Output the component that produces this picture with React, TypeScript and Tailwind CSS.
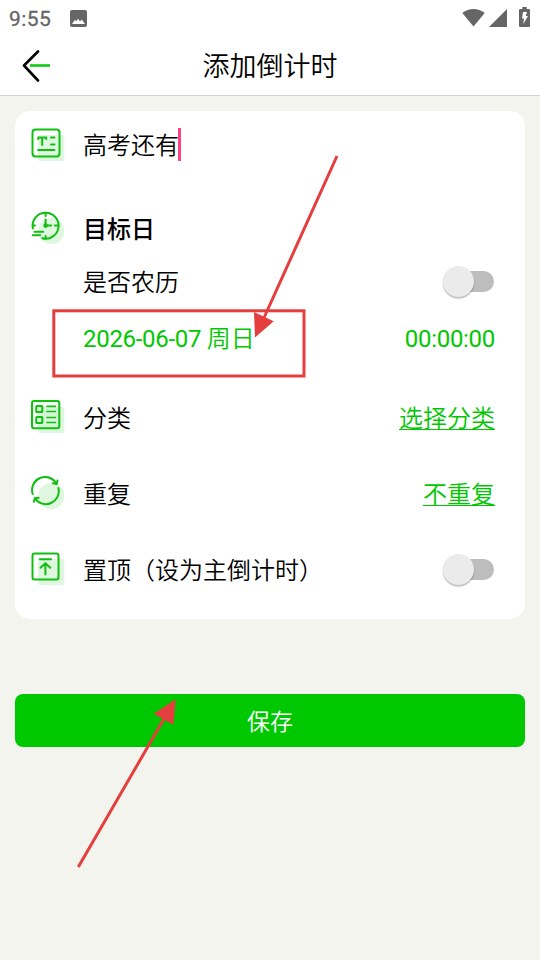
import type { ReactNode } from 'react';

function StatusBar() {
  return (
    <div className="flex h-9 items-center justify-between pl-[9px] pr-[10px] text-[#666666]">
      <div className="flex items-center">
        <span className="w-[61px] pt-[3px] text-[21px] leading-none tracking-[0.4px] [-webkit-text-stroke:0.3px_#666666]">9:55</span>
        <svg className="h-[17px] w-[17px]" viewBox="0 0 17 17">
          <rect width="17" height="17" rx="2" fill="currentColor" />
          <path d="m2 14 3-4.200 1.500 1.700L8 8.500l2 3 1.700-2L15 14z" fill="#fff" />
        </svg>
      </div>
      <div className="flex items-center">
        <svg className="mr-1 h-[20px] w-[23px]" viewBox="0 0 23 20">
          <path d="M.3 5C7-.5 16-.5 22.700 5L11.500 18.500z" fill="currentColor" />
        </svg>
        <svg className="mr-[12px] h-[20px] w-[18px]" viewBox="0 0 18 20">
          <path d="M18 1v18H0z" fill="currentColor" />
        </svg>
        <svg className="-mt-[2px] h-[20px] w-[11px]" viewBox="0 0 11 20">
          <path d="M3.300 0h4.400v2H10a1 1 0 0 1 1 1v16a1 1 0 0 1-1 1H1a1 1 0 0 1-1-1V3a1 1 0 0 1 1-1h2.300z" fill="currentColor" />
          <path d="M4 5h4L6.700 9H9l-4.700 8 .7-5.500H3z" fill="#fff" />
        </svg>
      </div>
    </div>
  );
}

function Header() {
  return (
    <header className="border-b border-[#d2d2d2] bg-white">
      <StatusBar />
      <div className="grid h-[59px] grid-cols-[80px_1fr_80px] items-center">
        <svg className="ml-[22px] h-8 w-7" viewBox="0 0 28 32" fill="none" strokeWidth="2.600" strokeLinecap="round">
          <path d="M16 1.500 2 15.500l14 15" stroke="#000" strokeLinejoin="round" />
          <path d="M8 15.500H28" stroke="#10c810" strokeLinecap="butt" />
        </svg>
        <h1 className="pt-1 text-center text-[27px] font-[350] leading-none">添加倒计时</h1>
      </div>
    </header>
  );
}

function Icon({ round, top = 7, children }: { round?: boolean; top?: number; children: ReactNode }) {
  return (
    <svg
      className="mr-[17px] h-9 w-9 shrink-0"
      viewBox="0 0 36 36"
      fill="none"
      stroke="#10c010"
      strokeWidth="2"
      strokeLinecap="round"
      strokeLinejoin="round"
    >
      {round ? (
        <circle cx="21.300" cy="20" r="13" fill="#dff6df" stroke="none" />
      ) : (
        <rect x="8" y={top} width="26.300" height="26" rx="2" fill="#dff6df" stroke="none" />
      )}
      {children}
    </svg>
  );
}

function TextIcon() {
  return (
    <Icon top={8}>
      <rect x="2.500" y="2.500" width="27" height="27" rx="3" />
      <path d="M8.200 12v-1.500h8V12M12.200 10.500V18M21 10.500h3.400M21 17.500h3.400M8.200 23h16.200" />
    </Icon>
  );
}

function ClockIcon() {
  return (
    <Icon round>
      <path d="M2.900 17.500A13 13 0 1 1 12.300 27.300" />
      <path d="M15.600 2v3M28.300 14.600h-3.500M15.600 27.500V25M3 14.600h2M15.600 8.500v6.100h5.600M4.500 20.800h8.700M2.700 24.200h7.500" />
      <circle cx="15.600" cy="14.600" r="1.300" fill="#10c010" />
    </Icon>
  );
}

function CategoryIcon() {
  return (
    <Icon>
      <rect x="2" y="1" width="27.300" height="27.300" rx="2" fill="#10c010" fillOpacity="0.04" />
      <rect x="6.300" y="6" width="6" height="6" rx="0.500" />
      <rect x="6.300" y="17" width="6" height="6" rx="0.500" />
      <path d="M17 6.300h8.400M17 11.500h8.400M17 17.500h8.400M17 22.500h8.400" strokeWidth="1.700" />
    </Icon>
  );
}

function RepeatIcon() {
  return (
    <Icon round>
      <path d="M2.700 18A13 13 0 0 1 26.500 7.800M28.400 12A13 13 0 0 1 5 22.400" />
      <path d="M27.500 4.500 26.600 8l-3.800-.700M8.600 21.800l-3.800.400-1 3.600" />
    </Icon>
  );
}

function TopIcon() {
  return (
    <Icon>
      <rect x="2.500" y="1.500" width="26" height="26" rx="2" />
      <path d="M9.800 7.300h11.200M15.400 11.500v11M10.500 15.800l4.900-4.600 4.900 4.600" />
    </Icon>
  );
}

function Toggle() {
  return (
    <span className="mb-px mr-px flex h-[21px] w-[51px] items-center rounded-full bg-gradient-to-r from-transparent from-30% to-[#bdbdbd] to-30%">
      <span className="h-[31px] w-[31px] shrink-0 rounded-full bg-[#ebebeb] shadow-[0_1.5px_1.5px_rgba(0,0,0,0.28)]" />
    </span>
  );
}

// red guide marks drawn over the screen
function Annotations() {
  return (
    <svg className="pointer-events-none absolute left-0 top-0 h-[960px] w-[540px]" viewBox="0 0 540 960" fill="none" stroke="#e53e3e" strokeWidth="3">
      <rect x="53.800" y="310.800" width="250.200" height="65.200" />
      <path d="M337 156 263 320M78.300 867 165 717" />
      <path d="m254 312 19.700 9.300L255 337.500zM153.700 713.700l22-14.400-2.400 25.400z" fill="#e53e3e" stroke="none" />
    </svg>
  );
}

export default function App() {
  return (
    <div className="relative flex h-[960px] w-[540px] flex-col overflow-hidden bg-[#f3f4ed] font-['Roboto','Noto_Sans_CJK_SC',sans-serif] text-black">
      <Header />
      <main className="px-[15px] pt-[15px]">
        <section className="rounded-[15px] bg-white pb-[11px] pl-[15px] pr-[30px] text-2xl font-[350] leading-none">
          <div className="flex h-[68px] items-center">
            <TextIcon />
            <span className="pt-0.5">高考还有</span>
            <span className="-ml-px mb-px h-[33px] w-[3px] bg-[#ff4081]" />
          </div>
          <div className="mt-[22px] flex h-14 items-center">
            <ClockIcon />
            <span className="pt-0.5 font-medium">目标日</span>
          </div>
          <div className="flex h-[50px] items-center justify-between pl-[53px]">
            <span className="pt-0.5">是否农历</span>
            <Toggle />
          </div>
          <div className="flex h-16 items-center justify-between pl-[53px] text-[#00c800]">
            <span className="font-normal tracking-[-0.3px]">
              2026-06-07 <span className="font-[350] tracking-normal">周日</span>
            </span>
            <span className="font-normal tracking-[-0.3px]">00:00:00</span>
          </div>
          <div className="mt-[9px] flex h-[76px] items-center">
            <CategoryIcon />
            <span className="pt-0.5">分类</span>
            <span className="ml-auto pt-0.5 text-[#00c800] underline decoration-1 underline-offset-2">选择分类</span>
          </div>
          <div className="flex h-[76px] items-center">
            <RepeatIcon />
            <span className="flex-1 pt-0.5">重复</span>
            <span className="pt-0.5 text-[#00c800] underline decoration-1 underline-offset-2">不重复</span>
          </div>
          <div className="flex h-[76px] items-center">
            <TopIcon />
            <span className="flex-1 pt-0.5">置顶（设为主倒计时）</span>
            <Toggle />
          </div>
        </section>
        <button className="mt-[75px] flex h-[53px] w-full items-center justify-center rounded-lg bg-[#00c800] pt-[3px] text-[23px] font-[350] leading-none text-white">
          保存
        </button>
      </main>
      <Annotations />
    </div>
  );
}
